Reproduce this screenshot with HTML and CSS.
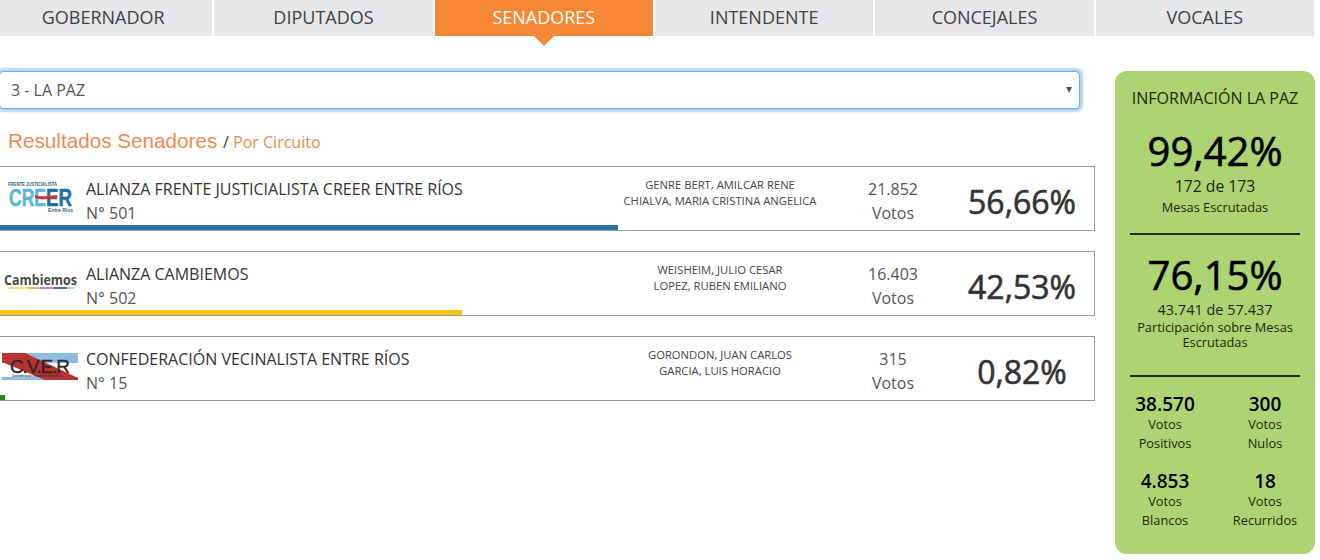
FILE: index.html
```html
<!DOCTYPE html>
<html lang="es">
<head>
    <meta charset="UTF-8" />
    <title>Resultados Senadores</title>
    <link rel="stylesheet" href="styles.css">
</head>
<body>
    <nav class="tabs">
        <a href="#">GOBERNADOR</a>
        <a href="#">DIPUTADOS</a>
        <a href="#" class="active">SENADORES</a>
        <a href="#">INTENDENTE</a>
        <a href="#">CONCEJALES</a>
        <a href="#">VOCALES</a>
    </nav>
    <div class="container">
        <main class="main">
            <div class="select-box">
                <select>
                    <option>3 - LA PAZ</option>
                </select>
            </div>
            <h2 class="title">Resultados Senadores <small>/ <span>Por Circuito</span></small></h2>

            <div class="row">
                <div class="logo">
                    <svg width="86" height="40" viewBox="0 0 86 40">
                        <text x="8" y="7" class="creer-small" textLength="49" lengthAdjust="spacingAndGlyphs">FRENTE JUSTICIALISTA</text>
                        <text x="9" y="27" class="creer-big creer-light" textLength="37" lengthAdjust="spacingAndGlyphs">CRE</text>
                        <text x="46" y="27" class="creer-big creer-dark" textLength="26" lengthAdjust="spacingAndGlyphs">ER</text>
                        <path d="M35 16 Q41 19 47 17 L57 16 V19 L47 20 Q41 21 35 19 Z" fill="#d8352f"/>
                        <text x="48" y="33" class="creer-small" textLength="25" lengthAdjust="spacingAndGlyphs">Entre Ríos</text>
                    </svg>
                </div>
                <div class="party">
                    <div class="name">ALIANZA FRENTE JUSTICIALISTA CREER ENTRE RÍOS</div>
                    <div class="number">N° 501</div>
                </div>
                <div class="candidates">GENRE BERT, AMILCAR RENE<br>CHIALVA, MARIA CRISTINA ANGELICA</div>
                <div class="votes">21.852<br>Votos</div>
                <div class="percent">56,66%</div>
                <div class="bar bar-blue" style="width: 618px"></div>
            </div>

            <div class="row">
                <div class="logo">
                    <svg width="86" height="40" viewBox="0 0 86 40">
                        <text x="4" y="21" class="cambiemos" textLength="73" lengthAdjust="spacingAndGlyphs">Cambiemos</text>
                        <rect x="8" y="23" width="20" height="2" fill="#f6e07a"/>
                        <rect x="28" y="23" width="12" height="2" fill="#f2b060"/>
                        <rect x="40" y="23" width="14" height="2" fill="#e878ae"/>
                        <rect x="54" y="23" width="13" height="2" fill="#5a68a4"/>
                        <rect x="67" y="23" width="7" height="2" fill="#a6d2e6"/>
                    </svg>
                </div>
                <div class="party">
                    <div class="name">ALIANZA CAMBIEMOS</div>
                    <div class="number">N° 502</div>
                </div>
                <div class="candidates">WEISHEIM, JULIO CESAR<br>LOPEZ, RUBEN EMILIANO</div>
                <div class="votes">16.403<br>Votos</div>
                <div class="percent">42,53%</div>
                <div class="bar bar-yellow" style="width: 462px"></div>
            </div>

            <div class="row">
                <div class="logo">
                    <svg width="86" height="40" viewBox="0 0 86 40">
                        <rect x="2" y="4" width="76" height="10" fill="#8fbbe3"/>
                        <rect x="2" y="28" width="76" height="3" fill="#8fbbe3"/>
                        <path d="M2 4 H25 L78 29 V31 H45 L2 13 Z" fill="#b93232"/>
                        <text x="10" y="24" class="cver" textLength="60" lengthAdjust="spacing">C.V.E.R</text>
                        <text x="12" y="27.5" class="cver-sub" textLength="50" lengthAdjust="spacingAndGlyphs">Confederación Vecinalista Entre Ríos</text>
                    </svg>
                </div>
                <div class="party">
                    <div class="name">CONFEDERACIÓN VECINALISTA ENTRE RÍOS</div>
                    <div class="number">N° 15</div>
                </div>
                <div class="candidates">GORONDON, JUAN CARLOS<br>GARCIA, LUIS HORACIO</div>
                <div class="votes">315<br>Votos</div>
                <div class="percent">0,82%</div>
                <div class="bar bar-green" style="width: 5px"></div>
            </div>
        </main>

        <aside class="info">
            <h3>INFORMACIÓN LA PAZ</h3>
            <div class="info-block">
                <div class="big">99,42%</div>
                <div class="count">172 de 173</div>
                <div class="caption">Mesas Escrutadas</div>
            </div>
            <div class="info-block second">
                <div class="big">76,15%</div>
                <div class="count">43.741 de 57.437</div>
                <div class="caption">Participación sobre Mesas Escrutadas</div>
            </div>
            <div class="stats">
                <div class="stat"><b>38.570</b>Votos<br>Positivos</div>
                <div class="stat"><b>300</b>Votos<br>Nulos</div>
                <div class="stat"><b>4.853</b>Votos<br>Blancos</div>
                <div class="stat"><b>18</b>Votos<br>Recurridos</div>
            </div>
        </aside>
    </div>
</body>
</html>
```

FILE: styles.css
```css
html, body {
    height: 560px;
    overflow: hidden;
}
body {
    margin: 0;
    background: #fff;
    font-family: 'Open Sans', sans-serif;
    color: #333;
}
.tabs {
    display: grid;
    grid-template-columns: repeat(6, 1fr);
    gap: 2px;
    width: 1320px;
    margin-left: -6px;
}
.tabs a {
    position: relative;
    height: 36px;
    line-height: 34px;
    text-align: center;
    background: #e6e7e8;
    color: #414042;
    font-size: 18px;
    text-decoration: none;
}
.tabs a.active {
    background: #f68735;
    color: #fff;
}
.tabs a.active::after {
    content: '';
    position: absolute;
    left: 50%;
    top: 36px;
    margin-left: -10px;
    border-top: 10px solid #f68735;
    border-left: 10px solid transparent;
    border-right: 10px solid transparent;
}
.container {
    display: flex;
    margin-top: 35px;
    margin-left: -1px;
}
.main {
    width: 1096px;
    margin-right: 20px;
}
.select-box {
    position: relative;
    width: 1081px;
}
.select-box select {
    display: block;
    width: 100%;
    height: 38px;
    padding: 0 0 0 11px;
    border: 1px solid #66afe9;
    border-radius: 4px;
    box-shadow: 0 0 2px 3px rgba(102,175,233,0.5);
    background: #fff;
    color: #555;
    font-family: 'Open Sans', sans-serif;
    font-size: 16px;
    appearance: none;
    outline: none;
}
.select-box::after {
    content: '▾';
    position: absolute;
    right: 8px;
    top: 9px;
    font-size: 12px;
    color: #555;
}
.title {
    margin: 20px 0 13px 9px;
    height: 24px;
    font-family: 'Liberation Sans', sans-serif;
    font-size: 20.7px;
    line-height: 24px;
    font-weight: 400;
    color: #ee8a4e;
}
.title small {
    font-family: 'Open Sans', sans-serif;
    font-size: 16px;
    color: #333;
}
.title small span {
    color: #ee8a4e;
}
.row {
    position: relative;
    display: flex;
    align-items: flex-start;
    box-sizing: border-box;
    height: 65px;
    margin-bottom: 20px;
    border: 1px solid #999;
    background: #fff;
}
.logo {
    width: 86px;
    height: 62px;
    padding-top: 12px;
    box-sizing: border-box;
    flex: none;
}
.logo svg {
    display: block;
}
.party {
    width: 531px;
    flex: none;
    padding-top: 10px;
}
.party .name {
    font-size: 16px;
    line-height: 24px;
    color: #333;
}
.party .number {
    font-size: 16px;
    line-height: 24px;
    color: #555;
}
.candidates {
    width: 206px;
    flex: none;
    padding-top: 10px;
    text-align: center;
    font-size: 11.25px;
    line-height: 16px;
    color: #444;
}
.votes {
    width: 82px;
    flex: none;
    margin-left: 29px;
    padding-top: 10px;
    text-align: center;
    font-size: 16px;
    line-height: 24px;
    color: #555;
}
.percent {
    flex: 1;
    padding: 13px 0 0 16px;
    text-align: center;
    font-size: 32px;
    line-height: 44px;
    -webkit-text-stroke: 0.6px #333;
    color: #333;
}
.bar {
    position: absolute;
    left: 0;
    bottom: 0;
    height: 5px;
}
.bar-blue { background: #26749f; }
.bar-yellow { background: #f4c60f; }
.bar-green { background: #1a8a1a; }
.creer-small {
    font-family: 'Liberation Sans', sans-serif;
    font-size: 5px;
    font-weight: 700;
    fill: #2b5f8a;
}
.creer-big {
    font-family: 'Liberation Sans', sans-serif;
    font-size: 23px;
    font-weight: 700;
    stroke-width: 0.5;
}
.creer-light { fill: #5bb6dc; stroke: #5bb6dc; }
.creer-dark { fill: #1d6da6; stroke: #1d6da6; }
.cambiemos {
    font-family: 'Open Sans', sans-serif;
    font-size: 13.5px;
    font-weight: 700;
    fill: #4a4a4a;
}
.cver {
    font-family: 'Liberation Sans', sans-serif;
    font-size: 19px;
    font-weight: 400;
    fill: #2e2526;
    stroke: #2e2526;
    stroke-width: 0.4;
}
.cver-sub {
    font-family: 'Liberation Sans', sans-serif;
    font-size: 3px;
    font-weight: 700;
    fill: #333;
}
.info {
    box-sizing: border-box;
    width: 200px;
    height: 483px;
    padding: 17px 15px 0;
    border-radius: 12px;
    background: #add472;
    color: #1c2a0c;
    text-align: center;
}
.info h3 {
    margin: 0 0 18px;
    font-size: 16px;
    line-height: 20px;
    font-weight: 400;
    white-space: nowrap;
}
.info-block {
    padding-bottom: 18px;
    border-bottom: 2px solid #1f2d0f;
}
.info-block.second {
    padding-top: 15px;
    padding-bottom: 25px;
}
.big {
    font-size: 40px;
    line-height: 50px;
    -webkit-text-stroke: 0.6px #000;
    color: #000;
}
.count {
    font-size: 15.75px;
    line-height: 20px;
}
.caption {
    font-size: 12.8px;
    line-height: 15px;
    margin-top: 4px;
}
.second .count {
    font-size: 14.5px;
}
.second .caption {
    margin-top: 0;
}
.stats {
    display: grid;
    grid-template-columns: 1fr 1fr;
    row-gap: 17px;
    margin: 0 -15px;
    padding-top: 16px;
    font-size: 12.8px;
    line-height: 19px;
}
.stat b {
    display: block;
    font-size: 19px;
    line-height: 22px;
    font-weight: 600;
    color: #000;
}
```
